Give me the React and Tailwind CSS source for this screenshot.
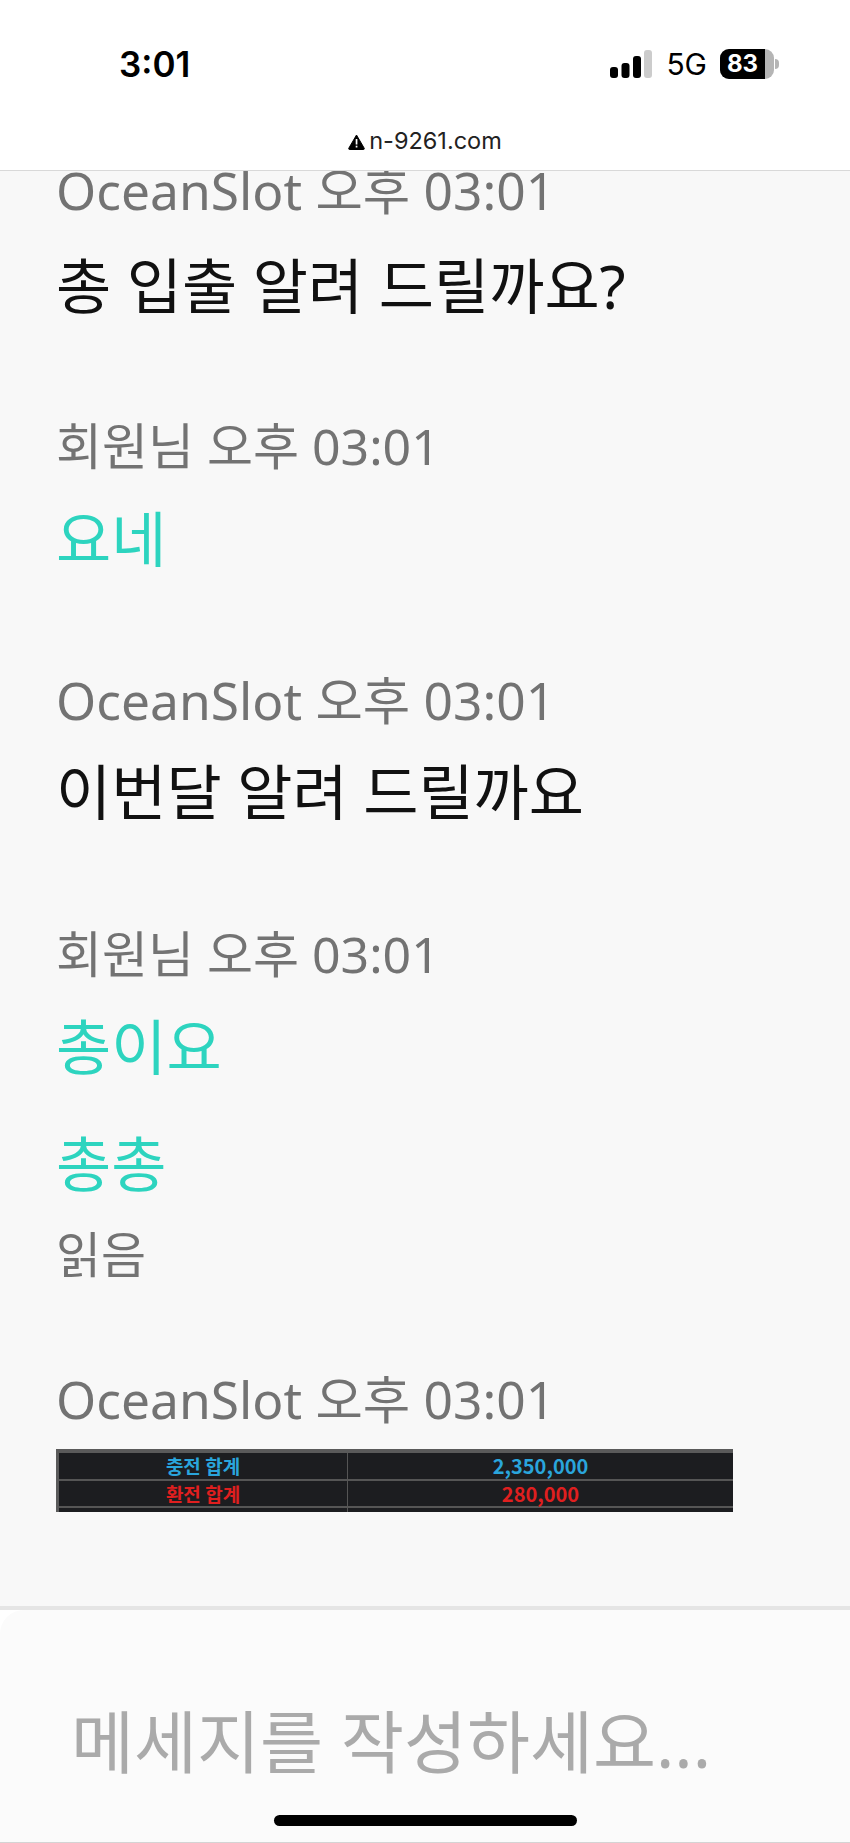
const font = "font-['Noto_Sans','Noto_Sans_CJK_KR',sans-serif]";

const Meta = ({ children, className = "" }) => (
    <p className={`h-[60px] leading-[60px] text-[#737373] ${className}`}>
        {children}
    </p>
);

const Message = ({ children, mine, className = "" }) => (
    <p
        className={`h-[72px] text-[60px] leading-[72px] ${
            mine ? "text-[#2dd4bf]" : "text-[#111111]"
        } ${className}`}
    >
        {children}
    </p>
);

const StatusBar = () => (
    <div className="flex h-[108px] items-start justify-between pl-[119px] pr-[71px] pt-[40px]">
        <span className="font-['Inter',sans-serif] text-[35px] font-semibold leading-[48px] text-black">
            3:01
        </span>
        <div className="flex items-center pt-[8px]">
            <svg width="42" height="28" viewBox="0 0 42 28" className="mr-[14px]">
                <rect x="0" y="17" width="8" height="11" rx="3" fill="#000" />
                <rect x="11.5" y="13" width="8" height="15" rx="3" fill="#000" />
                <rect x="23" y="6" width="8" height="22" rx="3" fill="#000" />
                <rect x="34" y="0" width="8" height="28" rx="3" fill="#ccc" />
            </svg>
            <span className="mr-[13px] font-['Inter',sans-serif] text-[30px] font-normal leading-[32px] text-black">
                5G
            </span>
            <div className="flex h-[30px] w-[54px] overflow-hidden rounded-[9px] bg-[#b5b5b5]">
                <div className="flex w-[45px] items-center justify-center bg-black font-['Inter',sans-serif] text-[24px] font-bold leading-none text-white">
                    83
                </div>
            </div>
            <div className="ml-[1px] h-[10px] w-[4px] rounded-r-full bg-[#b5b5b5]" />
        </div>
    </div>
);

const AddressBar = () => (
    <div className="flex h-[63px] items-start justify-center gap-[4px] border-b border-[#d9d9d9] pt-[19px]">
        <svg width="17" height="16" viewBox="0 0 17 16" className="mt-[7px]">
            <path
                d="M8.5 1 L16.2 14.2 a0.8 0.8 0 0 1 -0.7 1.3 H1.5 a0.8 0.8 0 0 1 -0.7 -1.3 Z"
                fill="#000"
                stroke="#000"
                strokeLinejoin="round"
            />
            <rect x="7.7" y="5" width="1.7" height="5.5" fill="#fff" />
            <rect x="7.7" y="11.7" width="1.7" height="1.8" fill="#fff" />
        </svg>
        <span className="font-['Inter',sans-serif] text-[23.5px] leading-[28px] text-[#222]">
            n-9261.com
        </span>
    </div>
);

const TotalsImage = () => (
    <div className="grid h-[63px] w-[677px] grid-cols-[289px_1fr] grid-rows-[28px_27px_4px] overflow-hidden border-t-[4px] border-l-[3px] border-[#5a5a5a] bg-[#1c1d20] font-['Noto_Sans_CJK_KR',sans-serif] font-bold">
        <div className="border-r border-b-2 border-[#555] text-center text-[19px] leading-[26px] text-[#2aa5dc]">충전 합계</div>
        <div className="border-b-2 border-[#555] text-center text-[20px] leading-[26px] text-[#2aa5dc]">2,350,000</div>
        <div className="border-r border-b-2 border-[#555] text-center text-[19px] leading-[25px] text-[#e01f1f]">환전 합계</div>
        <div className="border-b-2 border-[#555] text-center text-[20px] leading-[25px] text-[#e01f1f]">280,000</div>
        <div className="border-r border-[#555]" />
        <div />
    </div>
);

const App = () => {
    return (
        <div className={`flex h-[1843px] w-[850px] flex-col overflow-hidden bg-white ${font}`}>
            <StatusBar />
            <AddressBar />
            <div className="h-[1435px] overflow-hidden bg-[#f8f8f8] pl-[56px]">
                <p className="h-[38px] text-[51.5px] leading-[38px] text-[#737373]">OceanSlot 오후 03:01</p>
                <Message className="mt-[41px]">총 입출 알려 드릴까요?</Message>
                <Meta className="mt-[94px] text-[50px]">회원님 오후 03:01</Meta>
                <Message mine className="mt-[27px]">요네</Message>
                <Meta className="mt-[95px] text-[51.5px]">OceanSlot 오후 03:01</Meta>
                <Message className="mt-[26px]">이번달 알려 드릴까요</Message>
                <Meta className="mt-[96px] text-[50px]">회원님 오후 03:01</Meta>
                <Message mine className="mt-[27px]">총이요</Message>
                <Message mine className="mt-[45px]">총총</Message>
                <p className="mt-[24px] h-[60px] text-[49px] leading-[60px] text-[#737373]">읽음</p>
                <Meta className="mt-[85px] text-[51.5px]">OceanSlot 오후 03:01</Meta>
                <div className="mt-[20px]">
                    <TotalsImage />
                </div>
            </div>
            <div className="h-[4px] bg-[#e5e5e5]" />
            <div className="relative flex-1 rounded-tl-[24px] border-b border-[#d4d4d4] bg-[#fbfbfb] pl-[71px] pt-[92px]">
                <p className="text-[68.5px] leading-[80px] text-[#aaaaaa]">메세지를 작성하세요...</p>
                <div className="absolute bottom-[16px] left-[274px] h-[11px] w-[303px] rounded-full bg-black" />
            </div>
        </div>
    );
};

export default App;
